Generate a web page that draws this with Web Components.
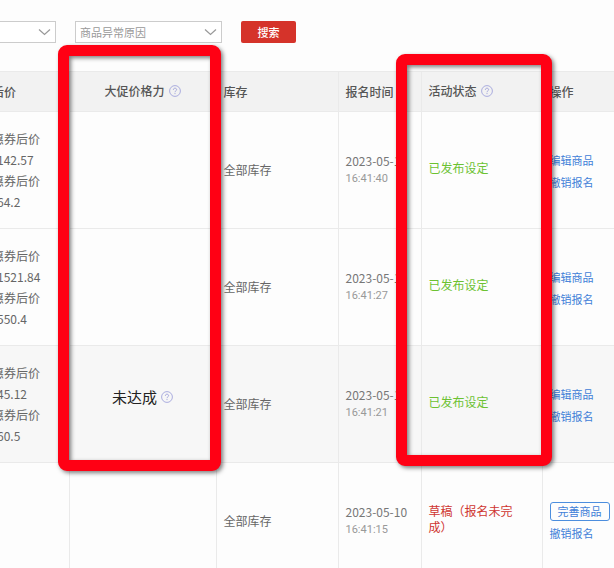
<!DOCTYPE html>
<html lang="zh-CN">
<head>
<meta charset="utf-8">
<title>活动报名记录</title>
<style>
  html, body { margin: 0; height: 100%; }
  body {
    overflow: hidden;
    background: #fdfdfd;
    color: #666;
    font: 12px/18px "Noto Sans CJK SC", "Noto Sans", sans-serif;
  }
</style>
</head>
<body>
<enroll-page></enroll-page>

<script>
const define = (name, html, setup) => {
  const tpl = document.createElement('template');
  tpl.innerHTML = html;
  customElements.define(name, class extends HTMLElement {
    constructor() {
      super();
      this.attachShadow({ mode: 'open' }).append(tpl.content.cloneNode(true));
    }
    connectedCallback() {
      if (setup && !this.ready) { this.ready = true; setup(this, this.shadowRoot); }
    }
  });
};

define('help-tip', `
  <style>
    :host { display: inline-block; width: 12px; height: 12px; margin-left: 4px; }
    svg { display: block; }
  </style>
  <svg width="12" height="12" viewBox="0 0 12 12" fill="none" stroke="#a3a5dc" role="img" aria-label="说明">
    <circle cx="6" cy="6" r="5.4" stroke-width="0.9"/>
    <path d="M4.4 4.9C4.4 3.8 5 3.2 6 3.2s1.6.6 1.6 1.5c0 1.1-1.6 1.2-1.6 2.5M6 8.1v1"/>
  </svg>`);

define('select-box', `
  <style>
    :host { display: grid; align-items: center; height: 22px; }
    select, svg { grid-area: 1 / 1; }
    select {
      appearance: none; width: 100%; height: 100%; margin: 0; padding: 0 24px 0 4px;
      border: 1px solid #ccc; border-radius: 0; background: #fff; color: #999;
      font: inherit; font-size: 11px;
    }
    svg { justify-self: end; margin-right: 5px; pointer-events: none; }
  </style>
  <select><option></option></select>
  <svg width="13" height="8" viewBox="0 0 13 8" fill="none" stroke="#999" stroke-width="1.2"><path d="M1 1.5l5.5 5 5.5-5"/></svg>`,
  (host, root) => {
    root.querySelector('select').setAttribute('aria-label', host.getAttribute('label'));
    root.querySelector('option').textContent = host.getAttribute('value') || '';
  });

define('search-button', `
  <style>
    :host { display: block; }
    button {
      display: block; width: 55px; height: 22px; padding: 0; border: 0; border-radius: 2px;
      background: #d5332a; color: #fff; font: inherit; font-size: 11px; font-weight: 500;
    }
  </style>
  <button type="button"><slot></slot></button>`);

define('filter-bar', `
  <style>
    :host { display: flex; align-items: center; gap: 19px; padding: 21px 0 28px; margin-left: -8px; }
    .first { width: 64px; }
    .reason { width: 147px; }
  </style>
  <select-box class="first" label="筛选条件"></select-box>
  <select-box class="reason" label="商品异常原因" value="商品异常原因"></select-box>
  <search-button>搜索</search-button>`);

define('price-lines', `
  <style>
    :host { display: block; line-height: 21px; }
    div { white-space: nowrap; }
    .price { padding-left: 5px; }
  </style>
  <div>惠券后价</div><div class="price" id="a"></div>
  <div>惠券后价</div><div class="price" id="b"></div>`,
  (host, root) => {
    root.getElementById('a').textContent = host.getAttribute('first');
    root.getElementById('b').textContent = host.getAttribute('second');
  });

define('enroll-time', `
  <style>
    :host { display: block; white-space: nowrap; }
    .date { color: #777; }
    .time { color: #999; font-family: Roboto, sans-serif; font-size: 11px; }
  </style>
  <div class="date"><slot name="date"></slot></div>
  <div class="time"><slot></slot></div>`);

define('status-text', `
  <style>
    :host { display: block; max-width: 92px; line-height: 16px; color: #6cc232; padding-bottom: 4px; }
    :host([kind="draft"]) { color: #cf3530; }
  </style>
  <slot></slot>`);

define('row-actions', `
  <style>
    :host { display: flex; flex-direction: column; align-items: flex-start; gap: 4px; padding-top: 2px; font-size: 11px; white-space: nowrap; }
    a { color: #4080d8; text-decoration: none; }
    :host([draft]) { gap: 3px; }
    :host([draft]) .main { border: 1px solid #4c8ede; border-radius: 3px; padding: 0 7px; line-height: 17px; }
  </style>
  <a class="main" href="#edit"><slot></slot></a>
  <a href="#revoke">撤销报名</a>`);

define('enroll-table', `
  <style>
    :host { display: block; margin-left: -8px; }
    table { width: 100%; border-collapse: collapse; table-layout: fixed; }
    th, td { box-sizing: border-box; padding: 0 7px; border: 1px solid #eaeaea; text-align: left; }
    th { height: 40px; background: #f2f2f2; color: #555; font-weight: 500; white-space: nowrap; }
    td { height: 117px; }
    th:first-child, td:first-child { padding-left: 0; border-left: 0; }
    th:last-child, td:last-child { border-right: 0; }
    .power { text-align: center; }
    .offers { width: 77px; } .force { width: 147px; } .stock { width: 122px; }
    .time { width: 83px; } .status { width: 121px; }
    .hover td { background: #f7f7f7; }
    .label { display: inline-flex; align-items: center; vertical-align: middle; padding-bottom: 2px; }
    .unmet { color: #222; font-size: 15px; padding-bottom: 14px; }
  </style>
  <table>
    <colgroup><col class="offers"><col class="force"><col class="stock"><col class="time"><col class="status"><col></colgroup>
    <thead>
      <tr>
        <th>后价</th>
        <th class="power"><span class="label">大促价格力<help-tip></help-tip></span></th>
        <th>库存</th><th>报名时间</th>
        <th><span class="label">活动状态<help-tip></help-tip></span></th>
        <th>操作</th>
      </tr>
    </thead>
    <tbody></tbody>
  </table>`,
  (host, root) => {
    const rows = [
      { prices: ['142.57', '64.2'], time: '16:41:40' },
      { prices: ['1521.84', '550.4'], time: '16:41:27' },
      { prices: ['45.12', '60.5'], time: '16:41:21', unmet: true },
      { time: '16:41:15', draft: true }
    ];
    root.querySelector('tbody').innerHTML = rows.map(r => `
      <tr class="${r.unmet ? 'hover' : ''}">
        <td>${r.prices ? `<price-lines first="${r.prices[0]}" second="${r.prices[1]}"></price-lines>` : ''}</td>
        <td class="power">${r.unmet ? '<span class="label unmet">未达成<help-tip></help-tip></span>' : ''}</td>
        <td>全部库存</td>
        <td><enroll-time><span slot="date">2023-05-10</span>${r.time}</enroll-time></td>
        <td><status-text ${r.draft ? 'kind="draft"' : ''}>${r.draft ? '草稿（报名未完成）' : '已发布设定'}</status-text></td>
        <td><row-actions ${r.draft ? 'draft' : ''}>${r.draft ? '完善商品' : '编辑商品'}</row-actions></td>
      </tr>`).join('');
  });

define('highlight-frame', `
  <style>
    :host {
      position: absolute; box-sizing: border-box; pointer-events: none;
      border: 11px solid #ff0014; border-radius: 9px;
      filter: drop-shadow(2px 2px 2px rgba(0, 0, 0, .5));
    }
  </style>`);

define('enroll-page', `
  <style>
    :host { display: block; position: relative; height: 100%; overflow: hidden; }
    .power { left: 58px; top: 45px; width: 163px; height: 426px; }
    .status { left: 396px; top: 54px; width: 156px; height: 412px; }
  </style>
  <filter-bar></filter-bar>
  <enroll-table></enroll-table>
  <highlight-frame class="power"></highlight-frame>
  <highlight-frame class="status"></highlight-frame>`);
</script>
</body>
</html>
